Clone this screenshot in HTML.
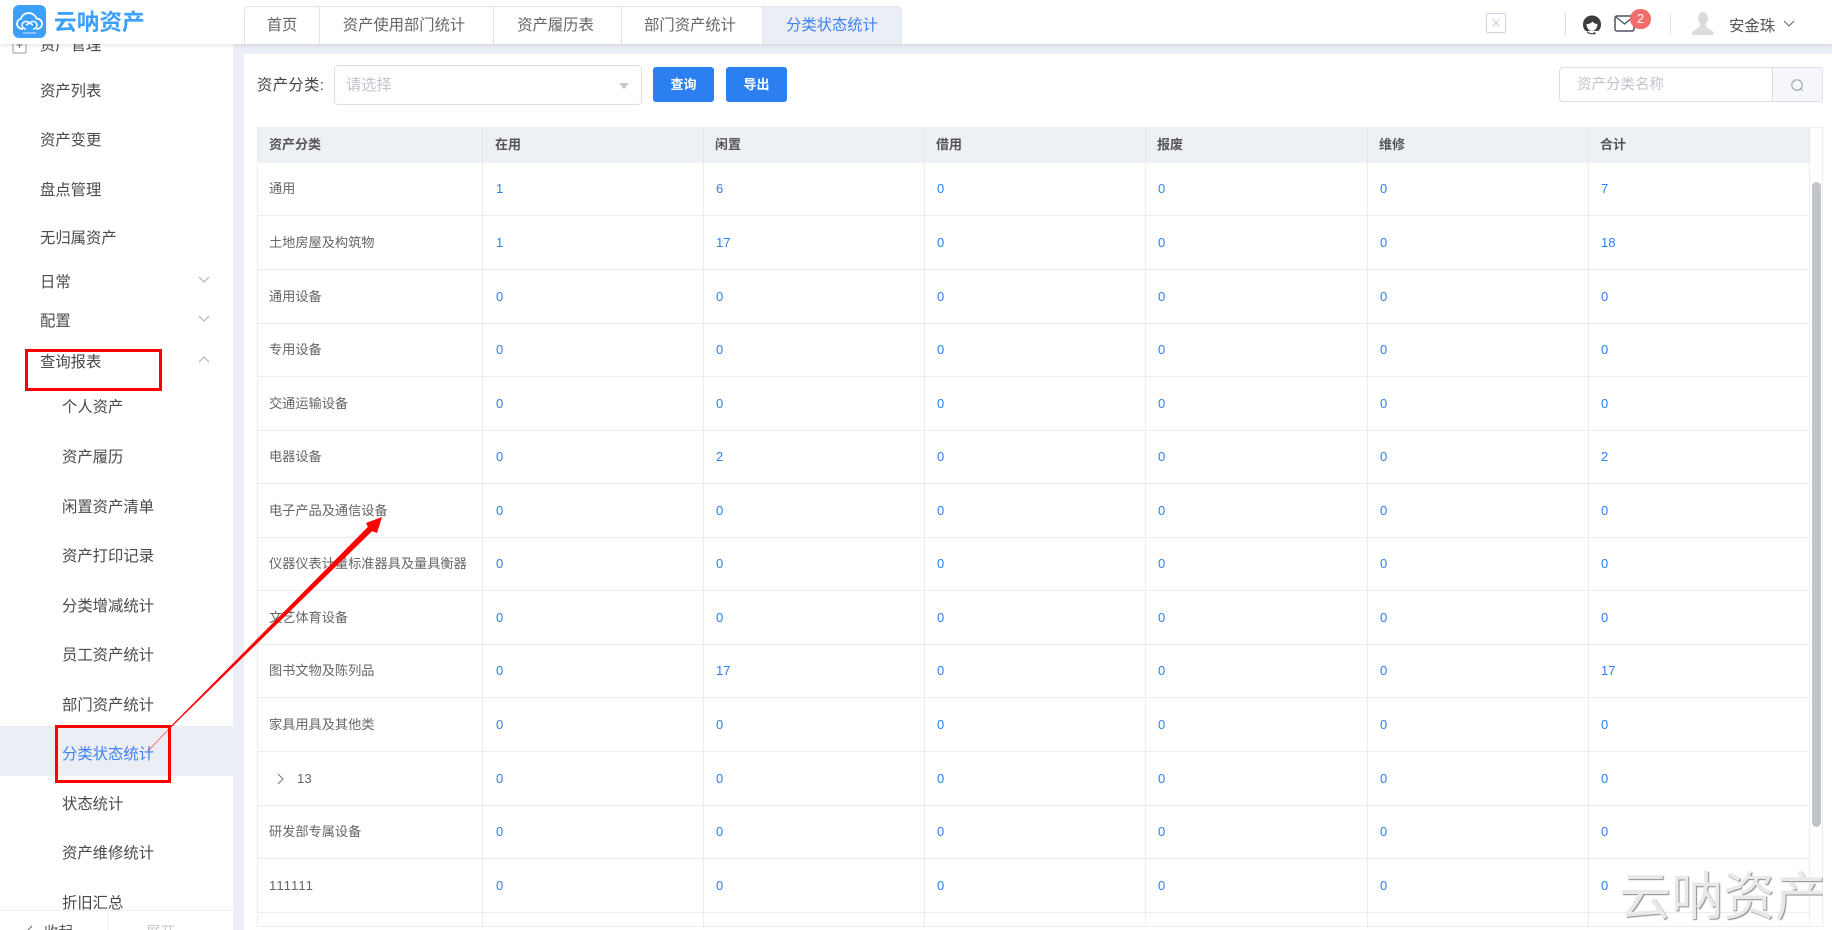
<!DOCTYPE html>
<html lang="zh"><head><meta charset="utf-8"><title>分类状态统计</title>
<style>
*{box-sizing:border-box}
html,body{margin:0;padding:0;width:1832px;height:930px;overflow:hidden;background:#ebeef4;font-family:"Liberation Sans","Noto Sans CJK SC",sans-serif}
.a{position:absolute;white-space:nowrap}
#side{position:absolute;left:0;top:0;width:233px;height:930px;background:#fff;overflow:hidden}
#side .i{position:absolute;white-space:nowrap;font-size:15.35px;line-height:20px;color:#4a4a4a;left:40px}
#side .s{left:62px}
#head{position:absolute;left:0;top:0;width:1832px;height:44px;background:#fff;box-shadow:0 1px 4px rgba(0,0,0,.12);z-index:3}
.tab{position:absolute;top:6px;height:38px;border:1px solid #e2e5ec;border-bottom:0;border-left:0;background:#fff;font-size:15.3px;line-height:38px;text-align:center;color:#666}
#card{position:absolute;left:244px;top:54px;width:1588px;height:876px;background:#fff}
table{position:absolute;left:257px;top:127px;border-collapse:separate;border-spacing:0;table-layout:fixed;width:1553px;font-size:13.2px;color:#666;font-kerning:none}
td,th{box-sizing:border-box;padding:0 0 0 11px;border-right:1px solid #ebedf4;border-bottom:1px solid #ebedf4;text-align:left;overflow:hidden;white-space:nowrap;line-height:16px}
th{height:36px;background:#edf0f5;font-weight:bold;color:#555;border-bottom-color:#edf0f5;border-top:1px solid #ebedf4;border-right-color:#e6e9f0;font-size:13px}
td:first-child,th:first-child{border-left:1px solid #ebedf4;padding-left:11px}
th:nth-child(2){padding-left:12px}
td.n{color:#2c7ef4;padding-left:12px;font-size:13px}
td.n:nth-child(2){padding-left:13px}
.btn{position:absolute;top:67px;height:35px;width:61px;background:#2b7ff0;border-radius:3px;color:#fff;font-size:13px;font-weight:bold;text-align:center;line-height:35px}
</style></head><body>

<div id="side">
<svg class="a" style="left:12px;top:37px" width="15" height="17" viewBox="0 0 15 17"><rect x="1" y="1" width="13" height="15" rx="1" fill="none" stroke="#999"/><path d="M7.5 5v6M4.5 8h6" stroke="#777"/></svg>
<div class="i" style="top:36px">资产管理</div>
<div class="i" style="top:82px">资产列表</div>
<div class="i" style="top:131px">资产变更</div>
<div class="i" style="top:181px">盘点管理</div>
<div class="i" style="top:229px">无归属资产</div>
<div class="i" style="top:273px">日常</div>
<div class="i" style="top:312px">配置</div>
<div class="i" style="top:353px">查询报表</div>
<div class="i s" style="top:398px">个人资产</div>
<div class="i s" style="top:448px">资产履历</div>
<div class="i s" style="top:498px">闲置资产清单</div>
<div class="i s" style="top:547px">资产打印记录</div>
<div class="i s" style="top:597px">分类增减统计</div>
<div class="i s" style="top:646px">员工资产统计</div>
<div class="i s" style="top:696px">部门资产统计</div>
<div class="a" style="left:0;top:726px;width:233px;height:50px;background:#ebeef4"></div>
<div class="i s" style="top:745px;color:#3d80ee">分类状态统计</div>
<div class="i s" style="top:795px">状态统计</div>
<div class="i s" style="top:844px">资产维修统计</div>
<div class="i s" style="top:894px">折旧汇总</div>
<svg class="a" style="left:198px;top:276px" width="12" height="8"><path d="M1 1l5 5 5-5" fill="none" stroke="#aab0bb"/></svg>
<svg class="a" style="left:198px;top:315px" width="12" height="8"><path d="M1 1l5 5 5-5" fill="none" stroke="#aab0bb"/></svg>
<svg class="a" style="left:198px;top:355px" width="12" height="8"><path d="M1 7l5-5 5 5" fill="none" stroke="#aab0bb"/></svg>
<div class="a" style="left:0;top:910px;width:233px;height:20px;background:#fff;border-top:1px solid #eef0f4"></div>
<div class="a" style="left:108px;top:910px;width:1px;height:20px;background:#eef0f4"></div>
<svg class="a" style="left:26px;top:925px" width="8" height="12"><path d="M6 1L1 6l5 5" fill="none" stroke="#666"/></svg>
<div class="a" style="left:44px;top:923px;font-size:14.5px;line-height:20px;color:#555">收起</div>
<div class="a" style="left:146px;top:923px;font-size:14.5px;line-height:20px;color:#c4c8d0">展开</div>
</div>

<div id="head">
<svg class="a" style="left:13px;top:5px" width="33" height="33" viewBox="0 0 33 33"><rect width="33" height="33" rx="6" fill="#3ea0fd"/><path d="M10 24c-3.500 0-6-2.400-6-5.300 0-2.600 1.800-4.500 4-5C9 10.200 12 8 15.500 8c3.800 0 6.800 2.300 8 5.500 3 0 5.500 2.300 5.500 5.200 0 3-2.400 5.300-5.500 5.300" fill="none" stroke="#fff" stroke-width="1.700"/><path d="M13 24c-2.400 0-4-1.800-4-3.800s1.700-3.800 4-3.800c3 0 4.500 3.300 7 3.300" fill="none" stroke="#fff" stroke-width="1.500"/><path d="M20 24c2.400 0 4-1.800 4-3.800s-1.700-3.800-4-3.800c-3 0-4.500 3.300-7 3.300" fill="none" stroke="#fff" stroke-width="1.500"/><path d="M10 28h13" stroke="#cfe6ff" stroke-width="1"/></svg>
<div class="a" style="left:54px;top:8px;font-size:22.7px;font-weight:bold;line-height:28px;color:#3ea0fd">云呐资产</div>
<div class="tab" style="left:244px;width:76px;border-left:1px solid #e2e5ec;border-top-left-radius:5px">首页</div>
<div class="tab" style="left:320px;width:174px;padding-right:5px">资产使用部门统计</div>
<div class="tab" style="left:494px;width:128px;padding-right:4px">资产履历表</div>
<div class="tab" style="left:622px;width:141px;padding-right:4px">部门资产统计</div>
<div class="tab" style="left:763px;width:139px;background:#ebeef4;color:#3d80ee;border-top-right-radius:5px">分类状态统计</div>
<div class="a" style="left:1486px;top:13px;width:20px;height:20px;border:1px solid #ccd4e4;border-radius:2px"></div>
<svg class="a" style="left:1491px;top:18px" width="10" height="10"><path d="M1.500 1.500l7 7M8.500 1.500l-7 7" stroke="#c5cad4" stroke-width="1"/></svg>
<div class="a" style="left:1565px;top:13px;width:1px;height:22px;background:#d8dbe2"></div>
<svg class="a" style="left:1582px;top:14px" width="20" height="21" viewBox="0 0 20 21"><path d="M1 10.500C1 5 5 1.500 10 1.500s9 3.500 9 9c0 3-1.200 5.500-3 6.500H4c-1.800-1-3-3.500-3-6.500z" fill="#3d3d3d"/><path d="M4.500 10c2 .3 4.500-.5 6-2.500 1 1.500 3 2.500 5 2.500 0 4-2.500 7-5.500 7s-5.500-3-5.500-7z" fill="#fff"/><path d="M5 17.500c1.500 2 4 2.500 7 2" fill="none" stroke="#444" stroke-width="1.200"/><circle cx="12.500" cy="19.300" r="1.100" fill="#333"/></svg>
<svg class="a" style="left:1614px;top:15px" width="21" height="17" viewBox="0 0 21 17"><rect x="1" y="1" width="19" height="15" rx="2" fill="#fff" stroke="#4f5461" stroke-width="1.500"/><path d="M2 2l8.500 7L19 2" fill="none" stroke="#4f5461" stroke-width="1.400"/></svg>
<div class="a" style="left:1630px;top:9px;width:21px;height:20px;border-radius:10px;background:#f56c6c;color:#fff;font-size:13px;line-height:20px;text-align:center">2</div>
<div class="a" style="left:1670px;top:13px;width:1px;height:22px;background:#dfe2e8"></div>
<svg class="a" style="left:1692px;top:11px" width="22" height="25" viewBox="0 0 22 25"><ellipse cx="11" cy="7.500" rx="5" ry="6.500" fill="#dcdcdc"/><path d="M8.500 13h5l1 3 7 5v3H0v-3l7-5z" fill="#dcdcdc"/></svg>
<div class="a" style="left:1729px;top:17px;font-size:15.4px;line-height:20px;color:#555">安金珠</div>
<svg class="a" style="left:1783px;top:20px" width="12" height="8"><path d="M1 1l5 5 5-5" fill="none" stroke="#666"/></svg>
</div>

<div id="card"></div>
<div class="a" style="left:257px;top:76px;font-size:15.2px;letter-spacing:.5px;line-height:20px;color:#444">资产分类:</div>
<div class="a" style="left:334px;top:65px;width:308px;height:40px;border:1px solid #dcdfe6;border-radius:4px;background:#fff;padding-left:11px;font-size:15.2px;line-height:39px;color:#c0c4cc">请选择</div>
<svg class="a" style="left:619px;top:83px" width="10" height="6"><path d="M0 0h10L5 6z" fill="#c0c4cc"/></svg>
<div class="btn" style="left:653px">查询</div>
<div class="btn" style="left:726px">导出</div>
<div class="a" style="left:1559px;top:67px;width:264px;height:35px;border:1px solid #dcdfe6;border-radius:4px;background:#fff;padding-left:17px;font-size:14.5px;line-height:35px;color:#c0c4cc">资产分类名称</div>
<div class="a" style="left:1772px;top:68px;width:50px;height:33px;background:#f5f7fa;border-left:1px solid #dcdfe6;border-radius:0 3px 3px 0"></div>
<svg class="a" style="left:1790px;top:78px" width="15" height="15"><circle cx="7" cy="7" r="5.200" fill="none" stroke="#9aa0aa" stroke-width="1.100"/><path d="M10.500 10.500l2 2" stroke="#9aa0aa" stroke-width="1.100"/></svg>

<table>
<colgroup><col style="width:226px"><col style="width:221px"><col style="width:221px"><col style="width:221px"><col style="width:222px"><col style="width:221px"><col style="width:221px"></colgroup>
<tr><th>资产分类</th><th>在用</th><th>闲置</th><th>借用</th><th>报废</th><th>维修</th><th>合计</th></tr>
<tr style="height:53px"><td>通用</td><td class="n">1</td><td class="n">6</td><td class="n">0</td><td class="n">0</td><td class="n">0</td><td class="n">7</td></tr>
<tr style="height:54px"><td>土地房屋及构筑物</td><td class="n">1</td><td class="n">17</td><td class="n">0</td><td class="n">0</td><td class="n">0</td><td class="n">18</td></tr>
<tr style="height:54px"><td>通用设备</td><td class="n">0</td><td class="n">0</td><td class="n">0</td><td class="n">0</td><td class="n">0</td><td class="n">0</td></tr>
<tr style="height:53px"><td>专用设备</td><td class="n">0</td><td class="n">0</td><td class="n">0</td><td class="n">0</td><td class="n">0</td><td class="n">0</td></tr>
<tr style="height:54px"><td>交通运输设备</td><td class="n">0</td><td class="n">0</td><td class="n">0</td><td class="n">0</td><td class="n">0</td><td class="n">0</td></tr>
<tr style="height:53px"><td>电器设备</td><td class="n">0</td><td class="n">2</td><td class="n">0</td><td class="n">0</td><td class="n">0</td><td class="n">2</td></tr>
<tr style="height:54px"><td>电子产品及通信设备</td><td class="n">0</td><td class="n">0</td><td class="n">0</td><td class="n">0</td><td class="n">0</td><td class="n">0</td></tr>
<tr style="height:53px"><td>仪器仪表计量标准器具及量具衡器</td><td class="n">0</td><td class="n">0</td><td class="n">0</td><td class="n">0</td><td class="n">0</td><td class="n">0</td></tr>
<tr style="height:54px"><td>文艺体育设备</td><td class="n">0</td><td class="n">0</td><td class="n">0</td><td class="n">0</td><td class="n">0</td><td class="n">0</td></tr>
<tr style="height:53px"><td>图书文物及陈列品</td><td class="n">0</td><td class="n">17</td><td class="n">0</td><td class="n">0</td><td class="n">0</td><td class="n">17</td></tr>
<tr style="height:54px"><td>家具用具及其他类</td><td class="n">0</td><td class="n">0</td><td class="n">0</td><td class="n">0</td><td class="n">0</td><td class="n">0</td></tr>
<tr style="height:54px"><td style="padding-left:39px">13</td><td class="n">0</td><td class="n">0</td><td class="n">0</td><td class="n">0</td><td class="n">0</td><td class="n">0</td></tr>
<tr style="height:53px"><td>研发部专属设备</td><td class="n">0</td><td class="n">0</td><td class="n">0</td><td class="n">0</td><td class="n">0</td><td class="n">0</td></tr>
<tr style="height:54px"><td>111111</td><td class="n">0</td><td class="n">0</td><td class="n">0</td><td class="n">0</td><td class="n">0</td><td class="n">0</td></tr>
<tr style="height:14px"><td></td><td></td><td></td><td></td><td></td><td></td><td></td></tr>
</table>
<svg class="a" style="left:276px;top:773px" width="9" height="12"><path d="M2 1l5 5-5 5" fill="none" stroke="#777"/></svg>
<div class="a" style="left:1810px;top:127px;width:13px;height:800px;border:1px solid #ebedf4;border-left:0;background:#fff"></div>
<div class="a" style="left:1812px;top:182px;width:9px;height:645px;border-radius:5px;background:#c1c4c9"></div>

<div class="a" style="left:1619px;top:866px;width:204px;height:64px;overflow:hidden;font-size:52px;line-height:64px;color:#e9e9e9;text-shadow:1px 1px 1px #8a8a8a;z-index:5">云呐资产</div>

<svg class="a" style="left:0;top:0;z-index:6" width="1832" height="930">
<rect x="26.500" y="350.500" width="134" height="39" fill="none" stroke="#f00" stroke-width="3"/>
<rect x="56.500" y="726.500" width="113" height="55" fill="none" stroke="#f00" stroke-width="3"/>
<path d="M148 751L169 729" stroke="#f00" stroke-opacity=".5" stroke-width="1" fill="none"/>
<polygon points="168,729 367.900,526.900 366,523 382,517 377,533 372.100,531.100 169,729.500" fill="#f00"/>
</svg>
</body></html>
